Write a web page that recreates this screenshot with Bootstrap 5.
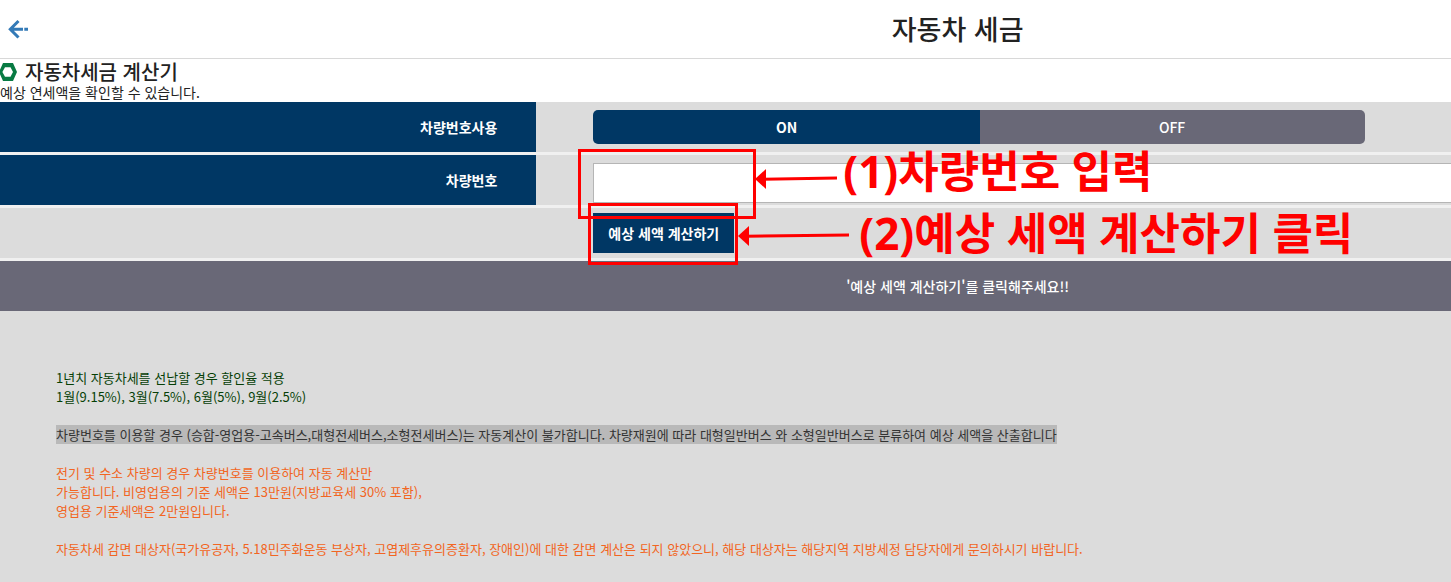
<!DOCTYPE html>
<html lang="ko">
<head>
<meta charset="utf-8">
<meta name="viewport" content="width=device-width, initial-scale=1">
<title>자동차 세금</title>
<link rel="stylesheet" href="https://cdn.jsdelivr.net/npm/bootstrap@5.3.0/dist/css/bootstrap.min.css">
<style>
  body { font-family: "Noto Sans CJK KR", "Noto Sans", sans-serif; font-size: 14px; line-height: 20px; color: #222; background: #dcdcdc; }
  .page-wide { width: 132%; }
  .top-bar { height: 59px; border-bottom: 1px solid #d8d8d8; }
  .top-title { font-size: 27px; line-height: 40px; font-weight: 500; }
  .back-link { left: 8px; top: 19px; }
  .intro { padding-bottom: 2px; }
  .intro-title { font-size: 20px; line-height: 25px; font-weight: 500; }
  .intro-text { line-height: 16px; }
  .form-line { height: 53px; border-bottom: 3px solid #f0f0f0; }
  .form-name { width: 28%; padding-right: 39px; color: #fff; font-weight: 700; }
  .form-name.filled { background: #003764; }
  .form-value { padding-left: 57px; }
  .switch-group { width: 58.4%; height: 34px; }
  .switch-group .btn { --bs-btn-border-radius: 5px; font-size: 14px; font-weight: 500; line-height: 20px; padding: 7px; border: 0; color: #fff; background: #696877; }
  .switch-group .btn-check:checked + .btn { color: #fff; background: #003764; font-weight: 700; }
  .number-box { height: 40px; border: 1px solid #b5b5b5; font-size: 14px; }
  .calc-btn { width: 141px; height: 40px; background: #003764; color: #fff; font-size: 14px; font-weight: 700; line-height: 20px; padding: 0; }
  .calc-btn:hover { background: #00284a; color: #fff; }
  .result-bar { height: 50px; background: #696877; color: #fff; font-weight: 500; }
  .notes { padding: 57px 56px 24px; font-size: 13px; line-height: 19px; }
  .notes p { margin-bottom: 19px; }
  .note-green { color: #063f06; }
  .note-orange { color: #f26522; }
  .note-picked { background: #b9b9b9; color: #333; }

  /* red guide marks lying over the form */
  .guide { position: absolute; pointer-events: none; z-index: 3; }
  .guide-frame { border: 3px solid #f00; }
  .guide-text { color: #f00; font-family: "Open Sans", "Noto Sans CJK KR", sans-serif; font-size: 44px; line-height: 60px; font-weight: 700; white-space: nowrap; }
  .frame-number { left: 42px; top: -6px; width: 178px; height: 70px; }
  .arrow-number { left: 219px; top: 14px; }
  .text-number { left: 307px; top: -14px; }
  .frame-calc { left: 52px; top: -5px; width: 150px; height: 62px; }
  .arrow-calc { left: 202px; top: 18px; }
  .text-calc { left: 323px; top: -5px; }
</style>
</head>
<body>
<div class="overflow-hidden">
<div class="page-wide">
  <header class="top-bar position-relative d-flex align-items-center justify-content-center bg-white">
    <a href="#" class="back-link position-absolute d-block lh-1" aria-label="뒤로">
      <svg class="d-block" width="20" height="20" viewBox="0 0 20 20" fill="none" stroke="#337ab7" stroke-width="3"><path d="M10.5 2 2.3 10.3l8.2 8.2M2.5 10.3H15M16.3 10.3H20"/></svg>
    </a>
    <h1 class="top-title m-0">자동차 세금</h1>
  </header>

  <section class="intro bg-white">
    <h2 class="intro-title d-flex align-items-center gap-2 m-0">
      <svg width="17" height="18" viewBox="0 0 17 18" aria-hidden="true"><path fill="#087a43" fill-rule="evenodd" d="M3 0h10l4 9-4 9H3L-1 9zM5 4.3 2.4 9 5 13.7h5.5L13 9l-2.500-4.700z"/></svg>
      자동차세금 계산기
    </h2>
    <p class="intro-text m-0">예상 연세액을 확인할 수 있습니다.</p>
  </section>

  <form onsubmit="return false">
    <div class="form-line d-flex">
      <div class="form-name filled d-flex align-items-center justify-content-end" id="useNumber">차량번호사용</div>
      <div class="form-value flex-grow-1 d-flex align-items-center">
        <div class="btn-group switch-group" role="group" aria-labelledby="useNumber">
          <input type="radio" class="btn-check" name="use" id="useOn" checked>
          <label class="btn w-50" for="useOn">ON</label>
          <input type="radio" class="btn-check" name="use" id="useOff">
          <label class="btn w-50" for="useOff">OFF</label>
        </div>
      </div>
    </div>

    <div class="form-line d-flex">
      <label class="form-name filled d-flex align-items-center justify-content-end" for="carNumber">차량번호</label>
      <div class="form-value flex-grow-1 position-relative pt-2">
        <input type="text" class="form-control rounded-0 number-box" id="carNumber">
        <div class="guide guide-frame frame-number"></div>
        <svg class="guide arrow-number" width="83" height="20" viewBox="0 0 83 20" aria-hidden="true"><path d="M8 10.200 82 9" stroke="#f00" stroke-width="3"/><path d="M0 10 11 0v20z" fill="#f00"/></svg>
        <div class="guide guide-text text-number">(1)차량번호 입력</div>
      </div>
    </div>

    <div class="form-line d-flex">
      <div class="form-name"></div>
      <div class="form-value flex-grow-1 position-relative d-flex align-items-center">
        <button type="submit" class="btn rounded-0 border-0 calc-btn">예상 세액 계산하기</button>
        <div class="guide guide-frame frame-calc"></div>
        <svg class="guide arrow-calc" width="112" height="20" viewBox="0 0 112 20" aria-hidden="true"><path d="M8 10.200 111 9" stroke="#f00" stroke-width="3"/><path d="M0 10 11 0v20z" fill="#f00"/></svg>
        <div class="guide guide-text text-calc">(2)예상 세액 계산하기 클릭</div>
      </div>
    </div>
  </form>

  <div class="result-bar d-flex align-items-center justify-content-center">'예상 세액 계산하기'를 클릭해주세요!!</div>

  <section class="notes">
    <p class="note-green">1년치 자동차세를 선납할 경우 할인율 적용<br>1월(9.15%), 3월(7.5%), 6월(5%), 9월(2.5%)</p>
    <p><span class="note-picked">차량번호를 이용할 경우 (승합-영업용-고속버스,대형전세버스,소형전세버스)는 자동계산이 불가합니다. 차량재원에 따라 대형일반버스 와 소형일반버스로 분류하여 예상 세액을 산출합니다</span></p>
    <p class="note-orange">전기 및 수소 차량의 경우 차량번호를 이용하여 자동 계산만<br>가능합니다. 비영업용의 기준 세액은 13만원(지방교육세 30% 포함),<br>영업용 기준세액은 2만원입니다.</p>
    <p class="note-orange mb-0">자동차세 감면 대상자(국가유공자, 5.18민주화운동 부상자, 고엽제후유의증환자, 장애인)에 대한 감면 계산은 되지 않았으니, 해당 대상자는 해당지역 지방세정 담당자에게 문의하시기 바랍니다.</p>
  </section>
</div>
</div>
<script src="https://cdn.jsdelivr.net/npm/bootstrap@5.3.0/dist/js/bootstrap.bundle.min.js"></script>
</body>
</html>
